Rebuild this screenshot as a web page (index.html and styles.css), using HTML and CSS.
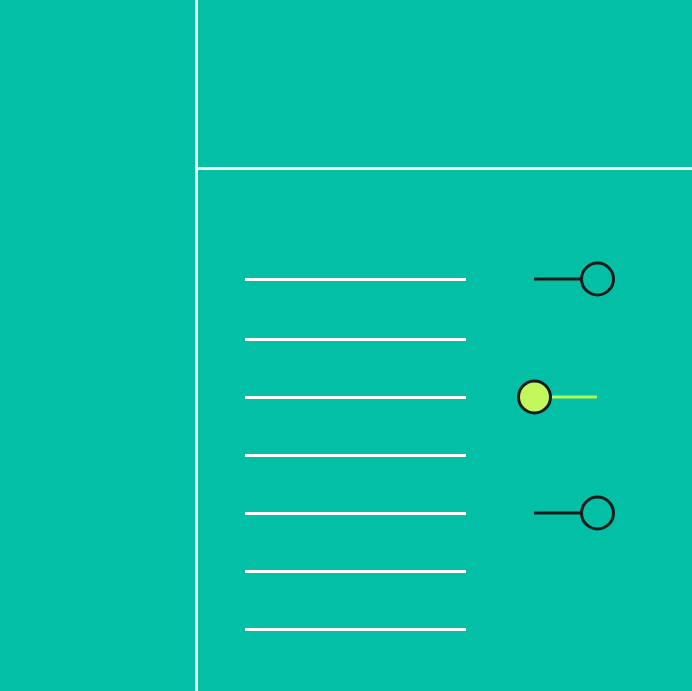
FILE: index.html
```html
<!DOCTYPE html>
<html>
<head>
<meta charset="utf-8">
<link rel="stylesheet" href="styles.css">
</head>
<body>
<div class="frame">
  <aside class="sidebar"></aside>
  <div class="vdivider"></div>
  <main class="main">
    <header class="topbar"></header>
    <div class="hdivider"></div>
    <section class="panel">
      <div class="row first">
        <span class="bar"></span>
        <svg class="toggle" width="98" height="38" viewBox="0 0 98 38">
          <line x1="17" y1="19" x2="65" y2="19" stroke="#1b1b1b" stroke-width="3"/>
          <circle cx="80.5" cy="19" r="16" fill="none" stroke="#1b1b1b" stroke-width="3"/>
        </svg>
      </div>
      <div class="row"><span class="bar"></span></div>
      <div class="row">
        <span class="bar"></span>
        <svg class="toggle" width="98" height="38" viewBox="0 0 98 38">
          <line x1="33" y1="19" x2="80" y2="19" stroke="#b6fb52" stroke-width="3"/>
          <circle cx="17.5" cy="19" r="16" fill="#c2f85c" stroke="#1b1b1b" stroke-width="3"/>
        </svg>
      </div>
      <div class="row"><span class="bar"></span></div>
      <div class="row">
        <span class="bar"></span>
        <svg class="toggle" width="98" height="38" viewBox="0 0 98 38">
          <line x1="17" y1="19" x2="65" y2="19" stroke="#1b1b1b" stroke-width="3"/>
          <circle cx="80.5" cy="19" r="16" fill="none" stroke="#1b1b1b" stroke-width="3"/>
        </svg>
      </div>
      <div class="row"><span class="bar"></span></div>
      <div class="row"><span class="bar"></span></div>
    </section>
  </main>
</div>
</body>
</html>
```
FILE: styles.css
```css
html, body {
  margin: 0;
  padding: 0;
  background: #03bfa6;
  font-family: "Liberation Sans", Arial, sans-serif;
}
.frame {
  display: flex;
  width: 692px;
  height: 691px;
  overflow: hidden;
}
.sidebar {
  width: 195px;
  flex: none;
}
.vdivider {
  width: 3px;
  flex: none;
  background: #eefffb;
}
.main {
  flex: 1;
  display: flex;
  flex-direction: column;
}
.topbar {
  height: 167px;
  flex: none;
}
.hdivider {
  height: 3px;
  flex: none;
  background: #eefffb;
}
.panel {
  padding: 80px 0 0 47px;
  display: flex;
  flex-direction: column;
}
.row {
  height: 58px;
  display: flex;
  align-items: center;
  gap: 51px;
}
.row.first {
  margin-bottom: 2px;
}
.bar {
  display: block;
  width: 221px;
  height: 3px;
  background: #ffffff;
}
.toggle {
  display: block;
  flex: none;
}
```
